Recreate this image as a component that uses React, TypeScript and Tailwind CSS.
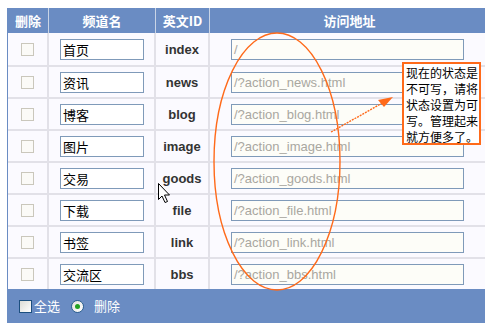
const ROWS = [
  { name: "首页", id: "index", url: "/" },
  { name: "资讯", id: "news", url: "/?action_news.html" },
  { name: "博客", id: "blog", url: "/?action_blog.html" },
  { name: "图片", id: "image", url: "/?action_image.html" },
  { name: "交易", id: "goods", url: "/?action_goods.html" },
  { name: "下载", id: "file", url: "/?action_file.html" },
  { name: "书签", id: "link", url: "/?action_link.html" },
  { name: "交流区", id: "bbs", url: "/?action_bbs.html" },
];

const CJK = "font-['SimSun','Noto_Sans_CJK_SC',sans-serif]";

export default function App() {
  return (
    <div className="relative w-[485px] h-[332px] overflow-hidden bg-white">
      <div className="pl-[7px] pt-[8px]">
        <div className="w-[482px] border-l border-[#6a8cc3]">
          {/* 表头 */}
          <div className={`flex h-[25px] bg-[#6a8cc3] text-white text-[13px] font-bold ${CJK}`}>
            <div className="w-[41px] flex items-center justify-center border-r border-[#c9d4e6]">删除</div>
            <div className="w-[107px] flex items-center justify-center border-r border-[#c9d4e6]">频道名</div>
            <div className="w-[54px] flex items-center justify-center border-r border-[#c9d4e6]">英文ID</div>
            <div className="flex-1 flex items-center justify-center">访问地址</div>
          </div>

          {ROWS.map((r, i) => (
            <div
              key={r.id}
              className={`flex h-[32px] bg-[#fbfaff] ${i > 0 ? "border-t-2" : ""} border-[#e2e1e8]`}
            >
              <div className="w-[41px] flex items-center justify-center border-r-2 border-[#e2e1e8]">
                <span className="block w-[13px] h-[13px] border border-[#cac7bc] bg-[#fbfaf7]" />
              </div>
              <div className="w-[107px] flex items-center pl-[11px] border-r-2 border-[#e2e1e8]">
                <div className={`w-[84px] h-[21px] border border-[#7f9ab9] bg-white text-[13px] leading-[19px] pl-[2px] text-black ${CJK}`}>
                  {r.name}
                </div>
              </div>
              <div className="w-[54px] flex items-center justify-center pt-[1px] border-r-2 border-[#e2e1e8] font-['Liberation_Sans',Arial,sans-serif] font-bold text-[13px] text-[#333]">
                {r.id}
              </div>
              <div className="flex-1 flex items-center pl-[21px]">
                <div className="w-[233px] h-[21px] border border-[#7f9ab9] bg-[#fdfdf8] text-[13px] leading-[19px] pl-[2px] text-[#a9a7a0] font-['Liberation_Sans',Arial,sans-serif]">
                  {r.url}
                </div>
              </div>
            </div>
          ))}

          {/* 底部操作 */}
          <div className={`flex items-center h-[34px] bg-[#6a8cc3] text-white text-[13px] ${CJK}`}>
            <span className="ml-[11px] block w-[13px] h-[13px] border border-[#1c4f7f] bg-gradient-to-br from-[#dcdcd6] to-white" />
            <span className="ml-[2px]">全选</span>
            <span className="ml-[11px] flex items-center justify-center w-[13px] h-[13px] rounded-full border border-[#2c5f8f] bg-gradient-to-br from-[#e2e2dc] to-white">
              <span className="block w-[5px] h-[5px] rounded-full bg-[#21a121]" />
            </span>
            <span className="ml-[10px]">删除</span>
          </div>
        </div>
      </div>

      {/* 标注：椭圆与箭头 */}
      <svg className="absolute left-0 top-0 pointer-events-none" width="485" height="332">
        <ellipse cx="277" cy="161.5" rx="63" ry="128.5" fill="none" stroke="#ff6a1a" strokeWidth="1.4" />
        <line x1="331" y1="132" x2="386" y2="101" stroke="#ff6a1a" strokeWidth="1.4" strokeDasharray="2 1" />
        <polygon points="393,97 378,100 384,107" fill="#ff6a1a" />
        {/* 鼠标指针 */}
        <path
          d="M158.5 183.5 L158.5 199.5 L162 196 L165 202.5 L167.5 201.5 L164.5 195 L169.5 195 Z"
          fill="#fff"
          stroke="#000"
          strokeWidth="1"
        />
      </svg>

      {/* 说明框 */}
      <div
        className={`absolute left-[402px] top-[62px] w-[79px] h-[83px] border-2 border-[#ff6a1a] bg-white text-[12px] leading-[16px] text-black pl-[2px] pt-[1px] whitespace-nowrap ${CJK}`}
      >
        现在的状态是
        <br />
        不可写，请将
        <br />
        状态设置为可
        <br />
        写。管理起来
        <br />
        就方便多了。
      </div>
    </div>
  );
}
